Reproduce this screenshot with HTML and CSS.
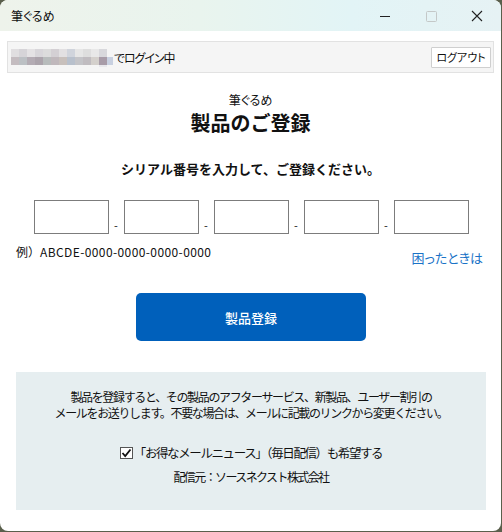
FILE: index.html
```html
<!DOCTYPE html>
<html lang="ja">
<head>
<meta charset="utf-8">
<link rel="stylesheet" href="styles.css">
</head>
<body>
<div class="window">
  <div class="titlebar">
    <span class="app-title">筆ぐるめ</span>
    <div class="controls">
      <svg class="ctl" width="46" height="31" viewBox="0 0 46 31"><line x1="18" y1="16.5" x2="28" y2="16.5" stroke="#222" stroke-width="1"/></svg>
      <svg class="ctl" width="46" height="31" viewBox="0 0 46 31"><rect x="18.5" y="11.5" width="10" height="10" rx="1" fill="none" stroke="#c4c8c8" stroke-width="1"/></svg>
      <svg class="ctl" width="46" height="31" viewBox="0 0 46 31"><path d="M18 11 L28 21 M28 11 L18 21" stroke="#222" stroke-width="1.1"/></svg>
    </div>
  </div>
  <div class="content">
    <div class="loginbar">
      <svg class="blur" width="102" height="20" viewBox="0 0 102 20">
        <rect x="0" y="2" width="8" height="8" fill="#e0dee0"/>
        <rect x="8" y="2" width="8" height="8" fill="#d6d4d8"/>
        <rect x="16" y="2" width="8" height="8" fill="#e4e2e4"/>
        <rect x="24" y="2" width="8" height="8" fill="#d8d6da"/>
        <rect x="32" y="2" width="8" height="8" fill="#dcdcdc"/>
        <rect x="40" y="2" width="8" height="8" fill="#d4d0d4"/>
        <rect x="48" y="2" width="8" height="8" fill="#e2e0e2"/>
        <rect x="56" y="2" width="8" height="8" fill="#d0d4dc"/>
        <rect x="64" y="2" width="8" height="8" fill="#e6e6e6"/>
        <rect x="72" y="2" width="8" height="8" fill="#dedede"/>
        <rect x="80" y="2" width="8" height="8" fill="#e8e8e8"/>
        <rect x="88" y="2" width="8" height="8" fill="#d8d8dc"/>
        <rect x="0" y="10" width="8" height="8" fill="#c4bcc0"/>
        <rect x="8" y="10" width="8" height="8" fill="#bcc0c4"/>
        <rect x="16" y="10" width="8" height="8" fill="#b4acb4"/>
        <rect x="24" y="10" width="8" height="8" fill="#aca4ac"/>
        <rect x="32" y="10" width="8" height="8" fill="#b8bcbc"/>
        <rect x="40" y="10" width="8" height="8" fill="#c0b8bc"/>
        <rect x="48" y="10" width="8" height="8" fill="#c8c0bc"/>
        <rect x="56" y="10" width="8" height="8" fill="#b8c0cc"/>
        <rect x="64" y="10" width="8" height="8" fill="#c4c4c8"/>
        <rect x="72" y="10" width="8" height="8" fill="#c0bcc0"/>
        <rect x="80" y="10" width="8" height="8" fill="#d4d0cc"/>
        <rect x="88" y="10" width="8" height="8" fill="#a89ca8"/>
        <rect x="88" y="18" width="8" height="2" fill="#e8e8ec"/>
        <rect x="96" y="10" width="6" height="8" fill="#c8d0e0"/>
      </svg>
      <span class="login-text">でログイン中</span>
      <button class="logout">ログアウト</button>
    </div>

    <div class="head">
      <div class="brand">筆ぐるめ</div>
      <h1 class="title">製品のご登録</h1>
      <p class="lead">シリアル番号を入力して、ご登録ください。</p>
    </div>

    <div class="serial">
      <input class="box" type="text">
      <span class="dash">-</span>
      <input class="box" type="text">
      <span class="dash">-</span>
      <input class="box" type="text">
      <span class="dash">-</span>
      <input class="box" type="text">
      <span class="dash">-</span>
      <input class="box" type="text">
    </div>

    <div class="hintrow">
      <span class="example">例）<span class="code">ABCDE-0000-0000-0000-0000</span></span>
      <a class="help">困ったときは</a>
    </div>

    <div class="btnwrap">
      <button class="register">製品登録</button>
    </div>

    <div class="panel">
      <p class="notice">製品を登録すると、その製品のアフターサービス、新製品、ユーザー割引の<br>メールをお送りします。不要な場合は、メールに記載のリンクから変更ください。</p>
      <label class="check">
        <span class="cb"><svg width="11" height="10" viewBox="0 0 11 10"><path d="M1.5 5 L4.2 8 L9.5 1.5" fill="none" stroke="#111" stroke-width="1.8"/></svg></span>
        <span class="check-text">「お得なメールニュース」（毎日配信）も希望する</span>
      </label>
      <p class="sender">配信元：ソースネクスト株式会社</p>
    </div>
  </div>
</div>
</body>
</html>
```

FILE: styles.css
```css
* { box-sizing: border-box; }
html, body { margin: 0; padding: 0; }
body {
  width: 502px;
  height: 532px;
  background: #5a5f4c;
  font-family: "Noto Sans CJK JP", "Noto Sans", sans-serif;
  color: #111;
  overflow: hidden;
}
.window {
  width: 501px;
  height: 531px;
  background: #fff;
  border-radius: 8px;
  overflow: hidden;
}
.titlebar {
  height: 31px;
  display: flex;
  align-items: center;
  justify-content: space-between;
  background: linear-gradient(90deg, #eef3eb 0%, #e9f4ee 40%, #e2f4f6 70%, #e6f2f4 100%);
}
.app-title {
  margin-left: 11px;
  font-size: 12px;
  font-feature-settings: "palt";
  color: #111;
}
.controls { display: flex; margin-right: 1px; }
.ctl { display: block; }
.content { display: flex; flex-direction: column; }
.loginbar {
  margin: 10px 7px 0 7px;
  height: 32px;
  border: 1px solid #e2e2e2;
  background: #f5f5f5;
  display: flex;
  align-items: center;
  padding: 0 2px 0 3px;
}
.blur { display: block; }
.login-text {
  font-size: 12px;
  font-feature-settings: "palt";
  letter-spacing: -1.1px;
  margin-left: 1px;
  flex: 1;
}
.logout {
  font-family: inherit;
  font-size: 11px;
  font-feature-settings: "palt";
  width: 60px;
  height: 21px;
  padding: 0;
  background: #fff;
  border: 1px solid #cfcfcf;
  border-radius: 1px;
  color: #111;
}
.head { display: flex; flex-direction: column; align-items: center; }
.brand { margin-top: 19px; font-size: 12px; line-height: 16px; font-feature-settings: "palt"; }
.title { margin: 2px 0 0; font-size: 20px; line-height: 26px; font-weight: 700; }
.lead { margin: 24px 0 0; font-size: 13px; line-height: 18px; font-weight: 700; }
.serial {
  margin-top: 22px;
  display: flex;
  justify-content: center;
  align-items: flex-end;
  padding-left: 1px;
}
.box {
  width: 75px;
  height: 34px;
  border: 1px solid #7c7c7c;
  border-radius: 0;
  margin: 0;
  padding: 0 4px;
  font-family: inherit;
  background: #fff;
}
.dash {
  width: 15px;
  text-align: center;
  font-size: 11px;
  line-height: 14px;
  margin-bottom: 2px;
}
.hintrow {
  margin: 10px 18px 0 16px;
  display: flex;
  justify-content: space-between;
  align-items: flex-end;
}
.example { font-size: 12px; line-height: 16px; }
.code { letter-spacing: 0.4px; }
.help {
  font-size: 13px;
  line-height: 16px;
  color: #1a73c7;
  font-feature-settings: "palt";
  margin-bottom: -6px;
}
.btnwrap { display: flex; justify-content: center; margin-top: 33px; padding-left: 1px; }
.register {
  width: 230px;
  height: 48px;
  background: #0060bb;
  color: #fff;
  border: none;
  border-radius: 5px;
  font-family: inherit;
  font-size: 13px;
  font-weight: 500;
}
.panel {
  margin: 31px 15px 0 16px;
  height: 138px;
  background: #e6eef0;
  display: flex;
  flex-direction: column;
  align-items: center;
}
.notice {
  margin: 17px 0 0;
  font-size: 12px;
  line-height: 16px;
  letter-spacing: -1.35px;
  text-align: center;
}
.check {
  margin-top: 24px;
  display: flex;
  align-items: center;
  font-size: 12.5px;
  line-height: 16px;
}
.check-text { letter-spacing: -1.4px; }
.cb {
  width: 13px;
  height: 12px;
  border: 1px solid #555;
  background: #fff;
  display: flex;
  align-items: center;
  justify-content: center;
  margin-right: 1px;
}
.sender { margin: 8px 0 0; font-size: 12px; line-height: 16px; letter-spacing: -1.6px; }
```
